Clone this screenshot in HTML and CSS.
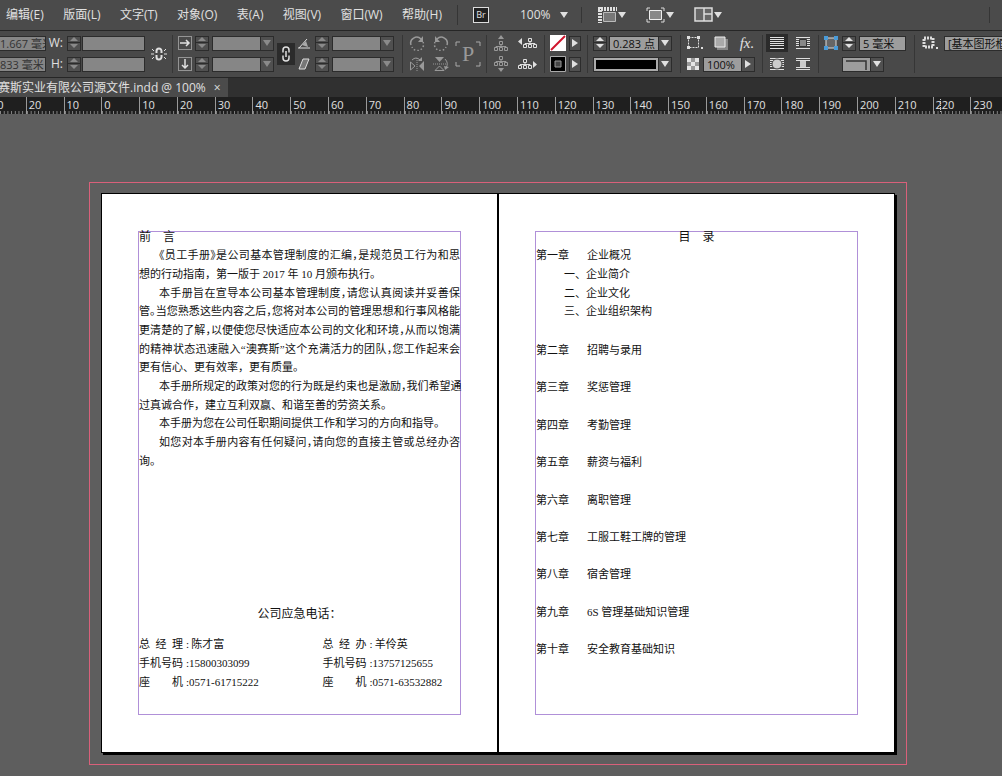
FILE: index.html
```html
<!DOCTYPE html>
<html lang="zh-CN">
<head>
    <meta charset="UTF-8">
    <meta name="viewport" content="width=device-width, initial-scale=1.0">
    <title>赛斯实业有限公司源文件.indd</title>
    <link rel="stylesheet" href="styles.css">
</head>
<body>
<svg class="sprite" aria-hidden="true">
    <symbol id="down" viewBox="0 0 8 6"><path d="M0 0h8L4 6z"/></symbol>
    <symbol id="right" viewBox="0 0 6 8"><path d="M0 0v8l6-4z"/></symbol>
    <symbol id="spin" viewBox="0 0 12 14">
        <path d="M0 6.500h12" stroke="#2c2c2c" fill="none"/>
        <path d="M2 5h8L6 1zM2 8h8l-4 4z"/>
    </symbol>
    <symbol id="tree" viewBox="0 0 14 10">
        <path d="M5.500.5h3v3h-3zM7 4v3M2 7V5.500h10V7M.5 6.500h3v3h-3zM5.500 6.500h3v3h-3zM10.500 6.500h3v3h-3z" fill="none" stroke="currentColor"/>
    </symbol>
    <symbol id="rotate" viewBox="0 0 16 16">
        <path d="M2 10a6 6 0 0 1 10-6" fill="none" stroke="currentColor" stroke-width="1.500"/>
        <path d="M14 7a6 6 0 0 1-11 5" fill="none" stroke="currentColor" stroke-width="1.500" stroke-dasharray="1.500 2"/>
        <path d="M14 1v6H9z"/>
    </symbol>
    <symbol id="lines" viewBox="0 0 16 14">
        <path d="M1 1.500h14M1 3.500h14M1 5.500h14M1 7.500h14M1 9.500h14M1 12.500h14" stroke="currentColor" fill="none"/>
    </symbol>
</svg>

<header class="menubar">
    <nav class="menus">
        <button>编辑(E)</button>
        <button>版面(L)</button>
        <button>文字(T)</button>
        <button>对象(O)</button>
        <button>表(A)</button>
        <button>视图(V)</button>
        <button>窗口(W)</button>
        <button>帮助(H)</button>
    </nav>
    <button class="bridge">Br</button>
    <button class="zoom">100% <svg width="8" height="6"><use href="#down"/></svg></button>
    <div class="views">
        <button aria-label="视图选项">
            <svg width="19" height="16" viewBox="0 0 19 16">
                <path d="M0 2h19M2 0v16" stroke="#e0e0e0" stroke-width="4" stroke-dasharray="2 1" fill="none"/>
                <path d="M5.500 5.500h12v9h-12z" fill="#777" stroke="#bbb"/>
            </svg>
            <svg width="8" height="6"><use href="#down"/></svg>
        </button>
        <button aria-label="屏幕模式">
            <svg width="19" height="16" viewBox="0 0 19 16">
                <path d="M1 4V1h3M15 1h3v3M18 12v3h-3M4 15H1v-3" stroke="#ddd" fill="none"/>
                <path d="M3.500 3.500h12v9h-12z" fill="#888" stroke="#eee"/>
            </svg>
            <svg width="8" height="6"><use href="#down"/></svg>
        </button>
        <button aria-label="排列文档">
            <svg width="19" height="16" viewBox="0 0 19 16">
                <path d="M1 1h17v13H1z" fill="#666" stroke="#ddd" stroke-width="1.500"/>
                <path d="M10 1v13M10 7h8" stroke="#ddd" stroke-width="1.500"/>
            </svg>
            <svg width="8" height="6"><use href="#down"/></svg>
        </button>
    </div>
</header>

<div class="control-bar">
    <div class="group size">
        <input class="off" aria-label="X" value="1.667 毫米">
        <label for="w">W:</label>
        <button class="spin off" aria-label="W 微调"><svg><use href="#spin"/></svg></button>
        <input class="off" id="w">
        <button class="tall" aria-label="约束宽高">
            <svg class="outline" width="16" height="16" viewBox="0 0 16 16">
                <path d="M5.500 7V5a2.500 2.500 0 0 1 5 0v2M5.500 9v2a2.500 2.500 0 0 0 5 0V9" stroke-width="2"/>
                <path d="M0 8h3M13 8h3M1 3l2 2M15 3l-2 2M1 13l2-2M15 13l-2-2"/>
            </svg>
        </button>
        <input class="off" aria-label="Y" value="833 毫米">
        <label for="h">H:</label>
        <button class="spin off" aria-label="H 微调"><svg><use href="#spin"/></svg></button>
        <input class="off" id="h">
    </div>

    <div class="group scale">
        <svg class="outline" width="14" height="14" viewBox="0 0 14 14">
            <path d="M.5.5h13v13H.5z" stroke-dasharray="1 1"/><path d="M2 7h9M8 4l3 3-3 3" stroke-width="1.500"/>
        </svg>
        <button class="spin off" aria-label="X 缩放微调"><svg><use href="#spin"/></svg></button>
        <span class="combo off"><input aria-label="X 缩放"><button aria-label="X 缩放列表"><svg width="8" height="6"><use href="#down"/></svg></button></span>
        <button class="tall chain" aria-label="约束缩放比例">
            <svg class="outline" width="10" height="16" viewBox="0 0 10 16">
                <path d="M2 6.500V4a3 3 0 0 1 6 0v2.500M2 9.500V12a3 3 0 0 0 6 0V9.500M5 5v6" stroke-width="1.500"/>
            </svg>
        </button>
        <svg width="12" height="12" viewBox="0 0 12 12"><path d="M0 11h12M1 11l8-9" stroke="#ddd"/><path d="M4 8l4-4 2 6z" fill="#aaa"/></svg>
        <button class="spin off" aria-label="旋转微调"><svg><use href="#spin"/></svg></button>
        <span class="combo off"><input aria-label="旋转角度"><button aria-label="旋转角度列表"><svg width="8" height="6"><use href="#down"/></svg></button></span>
        <svg class="outline" width="14" height="14" viewBox="0 0 14 14">
            <path d="M.5.5h13v13H.5z" stroke-dasharray="1 1"/><path d="M7 2v9M4 8l3 3 3-3" stroke-width="1.500"/>
        </svg>
        <button class="spin off" aria-label="Y 缩放微调"><svg><use href="#spin"/></svg></button>
        <span class="combo off"><input aria-label="Y 缩放"><button aria-label="Y 缩放列表"><svg width="8" height="6"><use href="#down"/></svg></button></span>
        <svg width="12" height="12" viewBox="0 0 12 12"><path d="M1 11l4-10h6L7 11z" fill="#777" stroke="#ddd"/></svg>
        <button class="spin off" aria-label="切变微调"><svg><use href="#spin"/></svg></button>
        <span class="combo off"><input aria-label="切变角度"><button aria-label="切变角度列表"><svg width="8" height="6"><use href="#down"/></svg></button></span>
    </div>

    <div class="group rotate">
        <button aria-label="顺时针旋转"><svg width="16" height="16"><use href="#rotate"/></svg></button>
        <button aria-label="逆时针旋转"><svg class="mirror" width="16" height="16"><use href="#rotate"/></svg></button>
        <span class="tall">
            <svg width="26" height="26" viewBox="0 0 26 26">
                <path d="M1 5V1h4M21 1h4v4M25 21v4h-4M5 25H1v-4" fill="none" stroke="#aaa"/>
                <text x="13" y="20" text-anchor="middle">P</text>
            </svg>
        </span>
        <button aria-label="水平翻转">
            <svg width="16" height="16" viewBox="0 0 16 16"><path d="M8 2v14" stroke="currentColor" stroke-dasharray="1 1"/><path d="M1.500 6v8L6 10z" fill="none" stroke="currentColor"/><path d="M15 5v10l-5-5zM13 1v4H9z"/><path d="M3 4q4-4 8 0" fill="none" stroke="currentColor"/></svg>
        </button>
        <button aria-label="垂直翻转">
            <svg width="16" height="16" viewBox="0 0 16 16"><path d="M0 8h13" stroke="currentColor" stroke-dasharray="1 1"/><path d="M2 1h9L6.500 6z"/><path d="M2 14.500h9L6.500 10z" fill="none" stroke="currentColor"/><path d="M12 3q4 4 1 9" fill="none" stroke="currentColor"/><path d="M11 10l5 1-4 3z"/></svg>
        </button>
    </div>

    <div class="group select-tree">
        <button class="dim" aria-label="选择容器"><svg width="14" height="16" viewBox="0 0 14 16"><path d="M4 4h6L7 0z"/><use href="#tree" y="6" width="14" height="10"/></svg></button>
        <button aria-label="选择上一对象"><svg width="19" height="12" viewBox="0 0 19 12"><path d="M4 1v7L0 4.500z"/><use href="#tree" x="5" y="1" width="14" height="10"/></svg></button>
        <button class="dim" aria-label="选择内容"><svg width="14" height="16" viewBox="0 0 14 16"><path d="M4 12h6l-3 4z"/><use href="#tree" width="14" height="10"/></svg></button>
        <button aria-label="选择下一对象"><svg width="19" height="12" viewBox="0 0 19 12"><path d="M15 3v7l4-3.500z"/><use href="#tree" y="1" width="14" height="10"/></svg></button>
    </div>

    <div class="group swatches">
        <button aria-label="填色"><svg width="16" height="16" viewBox="0 0 16 16"><path d="M0 0h16v16H0z" fill="#fff"/><path d="M1 15L15 1" stroke="#d0142c" stroke-width="2"/></svg></button>
        <button class="arrow" aria-label="填色列表"><svg width="6" height="8"><use href="#right"/></svg></button>
        <button aria-label="描边"><svg width="16" height="16" viewBox="0 0 16 16"><path d="M.5.5h15v15H.5z" fill="#000" stroke="#aaa"/><path d="M5 5h6v6H5z" fill="#444" stroke="#999"/></svg></button>
        <button class="arrow" aria-label="描边列表"><svg width="6" height="8"><use href="#right"/></svg></button>
    </div>

    <div class="group stroke">
        <button class="spin" aria-label="粗细微调"><svg><use href="#spin"/></svg></button>
        <span class="combo"><input class="weight" aria-label="描边粗细" value="0.283 点"><button aria-label="粗细列表"><svg width="8" height="6"><use href="#down"/></svg></button></span>
        <button class="combo wide" aria-label="描边类型"><span class="solid"></span><span class="drop"><svg width="8" height="6"><use href="#down"/></svg></span></button>
    </div>

    <div class="group effects">
        <button aria-label="框架"><svg width="16" height="14" viewBox="0 0 16 14"><path d="M1.500 1.500h10v10h-10z" fill="none" stroke="#ddd" stroke-dasharray="2 1"/><path d="M0 0h3v3H0zM10 0h3v3h-3zM0 10h3v3H0zM14 11h2v2h-2z"/></svg></button>
        <button aria-label="投影"><svg width="14" height="14" viewBox="0 0 14 14"><path d="M3 3h11v11H3z" fill="#888"/><path d="M1 1h10v10H1z" fill="#aaa" stroke="#eee"/></svg></button>
        <button class="fx">fx.</button>
        <div class="opacity">
            <svg width="12" height="12" viewBox="0 0 12 12"><path d="M0 0h12v12H0z" fill="#999"/><path d="M0 0h4v4H0zM8 0h4v4H8zM4 4h4v4H4zM0 8h4v4H0zM8 8h4v4H8z" fill="#e6e6e6"/></svg>
            <span class="combo"><input aria-label="不透明度" value="100%"><button aria-label="不透明度滑块"><svg width="6" height="8"><use href="#right"/></svg></button></span>
        </div>
    </div>

    <div class="group wrap">
        <button class="on" aria-label="无文本绕排"><svg width="16" height="14"><use href="#lines"/></svg></button>
        <button aria-label="沿定界框绕排"><svg width="16" height="14" viewBox="0 0 16 14"><use href="#lines" width="16" height="14"/><path d="M4.500 3.500h7v7h-7z" fill="#888" stroke="#333"/></svg></button>
        <button aria-label="沿对象形状绕排"><svg width="16" height="14" viewBox="0 0 16 14"><use href="#lines" width="16" height="14"/><circle cx="8" cy="7" r="5" fill="#ccc" stroke="#444"/></svg></button>
        <button aria-label="上下型绕排"><svg width="16" height="14" viewBox="0 0 16 14"><path d="M1 1.500h14M1 3.500h14M1 10.500h14M1 12.500h14" stroke="#ddd"/><path d="M5 4h6v6H5z" fill="#ccc"/></svg></button>
    </div>

    <div class="group corner">
        <svg width="16" height="16" viewBox="0 0 16 16"><path d="M3 3h10v10H3z" fill="#666" stroke="#ddd"/><path d="M1 1h4v4H1zM11 1h4v4h-4zM1 11h4v4H1zM11 11h4v4h-4z" fill="#4a9bd8"/></svg>
        <button class="spin" aria-label="转角微调"><svg><use href="#spin"/></svg></button>
        <input aria-label="转角大小" value="5 毫米">
        <button class="combo shape" aria-label="转角形状"><svg class="curve" width="26" height="12" viewBox="0 0 26 12"><path d="M2 3h20v9" stroke-width="1.500"/></svg><span class="drop"><svg width="8" height="6"><use href="#down"/></svg></span></button>
    </div>

    <div class="group style">
        <svg width="16" height="14" viewBox="0 0 16 14"><path d="M2 2h9v9H2z" fill="none" stroke="#ddd" stroke-width="3" stroke-dasharray="2 1"/><path d="M14 11h2v2h-2z"/></svg>
        <select aria-label="对象样式"><option>[基本图形框架]</option></select>
    </div>
</div>

<div class="tabs">
    <div class="tab">赛斯实业有限公司源文件.indd @ 100% <button aria-label="关闭">×</button></div>
</div>

<div class="ruler">
    <span>30</span><span>20</span><span>10</span><span>0</span><span>10</span><span>20</span><span>30</span><span>40</span><span>50</span>
    <span>60</span><span>70</span><span>80</span><span>90</span><span>100</span><span>110</span><span>120</span><span>130</span><span>140</span>
    <span>150</span><span>160</span><span>170</span><span>180</span><span>190</span><span>200</span><span>210</span><span>220<i class="pointer"></i></span><span>230</span>
</div>

<main class="pasteboard">
    <div class="bleed">
        <div class="spread">
            <article class="page">
                <div class="frame">
                    <h1>前　言</h1>
                    <div class="preface">
                        <p>
                            <span class="full first">《员工手册》是公司基本管理制度的汇编，是规范员工行为和思</span>
                            <span>想的行动指南，第一版于 2017 年 10 月颁布执行。</span>
                        </p>
                        <p>
                            <span class="full first">本手册旨在宣导本公司基本管理制度，请您认真阅读并妥善保</span>
                            <span class="full">管。当您熟悉这些内容之后，您将对本公司的管理思想和行事风格能</span>
                            <span class="full">更清楚的了解，以便使您尽快适应本公司的文化和环境，从而以饱满</span>
                            <span class="full">的精神状态迅速融入“澳赛斯”这个充满活力的团队，您工作起来会</span>
                            <span>更有信心、更有效率，更有质量。</span>
                        </p>
                        <p>
                            <span class="full first">本手册所规定的政策对您的行为既是约束也是激励，我们希望通</span>
                            <span>过真诚合作，建立互利双赢、和谐至善的劳资关系。</span>
                        </p>
                        <p>
                            <span class="first">本手册为您在公司任职期间提供工作和学习的方向和指导。</span>
                        </p>
                        <p>
                            <span class="full first">如您对本手册内容有任何疑问，请向您的直接主管或总经办咨</span>
                            <span>询。</span>
                        </p>
                    </div>
                    <h2>公司应急电话：</h2>
                    <div class="contacts">
                        <dl>
                            <dt>总 经 理</dt><dd>:&thinsp;陈才富</dd>
                            <dt>手机号码</dt><dd>:15800303099</dd>
                            <dt>座 机</dt><dd>:0571-61715222</dd>
                        </dl>
                        <dl>
                            <dt>总 经 办</dt><dd>:&thinsp;羊伶英</dd>
                            <dt>手机号码</dt><dd>:13757125655</dd>
                            <dt>座 机</dt><dd>:0571-63532882</dd>
                        </dl>
                    </div>
                </div>
            </article>
            <article class="page">
                <div class="frame">
                    <h1 class="center">目　录</h1>
                    <ul class="toc">
                        <li><b>第一章</b>企业概况</li>
                        <li class="sub">一、企业简介</li>
                        <li class="sub">二、企业文化</li>
                        <li class="sub">三、企业组织架构</li>
                        <li class="gap"><b>第二章</b>招聘与录用</li>
                        <li class="gap"><b>第三章</b>奖惩管理</li>
                        <li class="gap"><b>第四章</b>考勤管理</li>
                        <li class="gap"><b>第五章</b>薪资与福利</li>
                        <li class="gap"><b>第六章</b>离职管理</li>
                        <li class="gap"><b>第七章</b>工服工鞋工牌的管理</li>
                        <li class="gap"><b>第八章</b>宿舍管理</li>
                        <li class="gap"><b>第九章</b>6S 管理基础知识管理</li>
                        <li class="gap"><b>第十章</b>安全教育基础知识</li>
                    </ul>
                </div>
            </article>
        </div>
    </div>
</main>
</body>
</html>
```
FILE: styles.css
```css
* {
    box-sizing: border-box;
}
body {
    margin: 0;
    min-height: 100vh;
    overflow: hidden;
    background: #5e5e5e;
    color: #e0e0e0;
    font: 12px/16px "Open Sans", "Noto Sans CJK SC", sans-serif;
}
button, input, select {
    margin: 0;
    padding: 0;
    border: 0;
    border-radius: 0;
    background: none;
    color: inherit;
    font: inherit;
}
svg {
    display: block;
    flex: none;
    fill: currentColor;
}
.outline {
    fill: none;
    stroke: #e0e0e0;
}
.sprite {
    position: absolute;
    width: 0;
    height: 0;
}

/* menu bar */
.menubar {
    display: flex;
    align-items: center;
    height: 31px;
    background: #4b4b4b;
    border-bottom: 1px solid #262626;
    white-space: nowrap;
}
.menus {
    display: flex;
    flex: none;
    justify-content: space-between;
    width: 458px;
    padding: 2px 15px 2px 6px;
    border-right: 1px solid #353535;
}
.bridge {
    width: 16px;
    height: 16px;
    margin-left: 15px;
    border: 1px solid #ddd;
    background: #222;
    font-size: 9px;
    line-height: 14px;
}
.zoom {
    display: flex;
    align-items: center;
    gap: 9px;
    margin-left: 31px;
    padding-right: 13px;
    border-right: 1px solid #353535;
}
.views {
    display: flex;
    flex: 1;
    gap: 20px;
    margin-right: 12px;
    padding-left: 16px;
    border-right: 1px solid #353535;
}
.views button {
    display: flex;
    align-items: center;
    gap: 1px;
}

/* control bar */
.control-bar {
    display: flex;
    height: 47px;
    padding: 4px 0;
    background: #494949;
    border-bottom: 1px solid #262626;
    overflow: hidden;
}
.group {
    display: grid;
    flex: none;
    grid-template-rows: 16px 16px;
    row-gap: 5px;
    align-items: center;
    align-content: start;
    padding: 0 6px;
    border-right: 1px solid #363636;
}
.group button {
    display: flex;
    align-items: center;
    justify-content: center;
}
.group label {
    text-align: right;
}
.group input, .group select {
    min-width: 0;
    width: 100%;
    height: 15px;
    border: 1px solid #2c2c2c;
    background: #9d9d9d;
    color: #111;
    font-size: 11px;
    line-height: 13px;
}
.group .off, .off input {
    background: #868686;
    color: #333;
}
.tall {
    grid-row: 1 / 3;
}
.group .spin {
    height: 15px;
    border: 1px solid #2c2c2c;
    background: #505050;
}
.spin svg {
    width: 12px;
    height: 14px;
}
.group .spin.off, .off button {
    background: #505050;
    color: #8a8a8a;
}
.group .combo {
    display: flex;
    height: 15px;
    border: 1px solid #2c2c2c;
}
.combo input {
    flex: 1;
    height: 13px;
    border: 0;
}
.combo button, .drop {
    display: flex;
    flex: none;
    align-items: center;
    justify-content: center;
    width: 13px;
    height: 13px;
    border-left: 1px solid #2c2c2c;
    background: #505050;
}
.size {
    grid-template-columns: 46px 17px 19px 63px 27px;
    padding: 0;
}
.size .tall {
    grid-column: 5;
}
.size > input:first-child, .size > input:nth-of-type(3) {
    border-left: 0;
}
.size .spin {
    width: 14px;
    margin-left: 4px;
}
.scale {
    grid-template-columns: 14px 14px 62px 18px 14px 14px 62px;
    column-gap: 3px;
    padding: 0 8px 0 5px;
}
.scale .chain {
    grid-column: 4;
    height: 22px;
    background: #2b2b2b;
}
.rotate {
    grid-template-columns: 20px 20px 26px;
    column-gap: 4px;
    padding: 0 5px 0 4px;
    color: #999;
}
.rotate .tall {
    grid-column: 3;
}
.rotate text {
    font: 22px "Liberation Serif", serif;
}
.mirror {
    transform: scaleX(-1);
}
.select-tree {
    grid-template-columns: 14px 19px;
    column-gap: 10px;
    padding: 0 7px;
}
.dim {
    color: #999;
}
.swatches {
    grid-template-columns: 16px 12px;
    column-gap: 3px;
    padding: 0 6px 0 5px;
}
.group .arrow {
    height: 15px;
    border: 1px solid #2c2c2c;
    background: #505050;
}
.stroke {
    grid-template-columns: 14px 63px;
    column-gap: 2px;
    padding: 0 8px 0 5px;
}
.stroke .weight {
    text-align: center;
}
.stroke .wide {
    grid-column: 1 / 3;
}
.solid {
    flex: 1;
    height: 13px;
    border: 2px solid #aaa;
    background: #000;
}
.effects {
    grid-template-columns: 16px 14px 16px;
    column-gap: 11px;
    padding-right: 7px;
}
.group .fx {
    font: italic 15px/16px "Liberation Serif", serif;
}
.opacity {
    display: flex;
    grid-column: 1 / 4;
    gap: 4px;
    align-items: center;
}
.opacity .combo {
    flex: 1;
}
.opacity input {
    padding-left: 3px;
}
.wrap {
    grid-template-columns: 22px 22px;
    column-gap: 4px;
    padding: 0 4px 0 3px;
}
.wrap .on {
    height: 18px;
    background: #2b2b2b;
}
.corner {
    grid-template-columns: 16px 14px 47px;
    column-gap: 3px;
    padding: 0 8px 0 4px;
}
.corner input, .style select {
    padding-left: 3px;
}
.corner .shape {
    grid-column: 2 / 4;
    width: 42px;
    background: #9d9d9d;
}
.curve {
    fill: none;
    stroke: #333;
}
.style {
    flex: 1;
    grid-template-columns: 16px 1fr;
    column-gap: 6px;
    padding: 0 0 0 7px;
    border-right: 0;
}
.group.style select {
    width: 100px;
    appearance: none;
}

/* document tabs */
.tabs {
    display: flex;
    height: 19px;
    background: #303030;
    overflow: hidden;
}
.tab {
    display: flex;
    gap: 8px;
    margin-left: -2px;
    padding: 1px 7px 0 0;
    background: #4b4b4b;
    line-height: 18px;
    white-space: nowrap;
}

/* ruler, one cell for every 10 mm */
.ruler {
    display: flex;
    height: 17px;
    margin: 0 -6px 0 -12px;
    background: #1f1f1f;
}
.ruler span {
    position: relative;
    flex: 1 0 0;
    padding-left: 2px;
    border-left: 1px solid #999;
    background: linear-gradient(90deg, #8a8a8a 1px, transparent 1px) left bottom / 10% 3px repeat-x;
    font-size: 11px;
    line-height: 16px;
}
.pointer {
    position: absolute;
    top: 2px;
    left: 6px;
    height: 13px;
    border-left: 1px dotted #ccc;
}

/* pages */
.pasteboard {
    padding: 68px 95px 11px 89px;
}
.bleed {
    padding: 10px 11px 11px;
    border: 1px solid #d9607a;
}
.spread {
    display: grid;
    grid-template-columns: repeat(2, minmax(0, 1fr));
    gap: 2px;
    border: 1px solid #000;
    background: #000;
    box-shadow: 2px 2px 0 #000;
}
.page {
    padding: 37px 36px;
    background: #fff;
    color: #111;
    font-family: "Liberation Serif", "Noto Sans CJK SC", serif;
    font-size: 11px;
}
.frame {
    display: flex;
    flex-direction: column;
    min-height: 484px;
    padding-bottom: 22px;
    border: 1px solid #b090d8;
    white-space: nowrap;
}
h1, h2 {
    margin: 0;
    font-size: 12px;
    font-weight: normal;
    line-height: 11px;
}
h2 {
    margin: auto 0 12px;
    line-height: 18px;
    text-align: center;
}
.center {
    text-align: center;
}
.preface, .toc {
    display: grid;
    grid-template-columns: minmax(0, 1fr);
    grid-auto-rows: 1fr;
    align-items: center;
    height: 224px;
    margin: 3px 0 0;
}
.preface p {
    display: contents;
}
.full {
    font-feature-settings: "halt";
    text-align-last: justify;
}
.first {
    padding-left: 20px;
}
.contacts {
    display: grid;
    grid-template-columns: 4fr 3fr;
}
.contacts dl {
    display: grid;
    grid-template-columns: 44px 1fr;
    column-gap: 3px;
    margin: 0;
    line-height: 19px;
}
.contacts dt {
    text-align-last: justify;
}
.contacts dd {
    margin: 0;
}
.toc {
    height: 411px;
    padding: 0;
    list-style: none;
}
.toc li {
    display: flex;
}
.toc b {
    width: 51px;
    font-weight: normal;
}
.toc .sub {
    padding-left: 28px;
}
.toc .gap {
    grid-row-end: span 2;
    align-self: end;
}
```
